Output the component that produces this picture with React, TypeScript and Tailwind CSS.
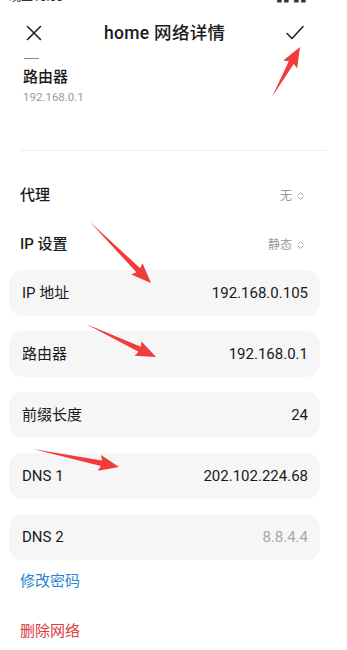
import React from 'react';

type Row = { label: string; value: string; muted?: boolean };

const rows: Row[] = [
  { label: 'IP 地址', value: '192.168.0.105' },
  { label: '路由器', value: '192.168.0.1' },
  { label: '前缀长度', value: '24' },
  { label: 'DNS 1', value: '202.102.224.68' },
  { label: 'DNS 2', value: '8.8.4.4', muted: true },
];

// annotation arrows: tail -> tip
const arrows = [
  { from: [272, 97], to: [300, 47] },
  { from: [90, 222], to: [151, 283] },
  { from: [86, 324], to: [156, 357] },
  { from: [33, 449], to: [119, 467] },
];

function arrowPoints(from: number[], to: number[]) {
  const [x1, y1] = from;
  const [x2, y2] = to;
  const dx = x2 - x1;
  const dy = y2 - y1;
  const len = Math.hypot(dx, dy);
  const ux = dx / len;
  const uy = dy / len;
  const px = -uy;
  const py = ux;
  const head = 18;
  const bx = x2 - ux * head;
  const by = y2 - uy * head;
  const shaft = 2.8;
  const wing = 8;
  const pts = [
    [x1, y1],
    [bx + px * shaft, by + py * shaft],
    [bx + px * wing - ux * 2, by + py * wing - uy * 2],
    [x2, y2],
    [bx - px * wing - ux * 2, by - py * wing - uy * 2],
    [bx - px * shaft, by - py * shaft],
  ];
  return pts.map((p) => p.join(',')).join(' ');
}

function Updown() {
  return (
    <svg width="7" height="10" viewBox="0 0 7 10" fill="none" stroke="#a8a8a8" strokeWidth="1" strokeLinecap="round" strokeLinejoin="round">
      <path d="M1 4 L3.5 1.5 L6 4" />
      <path d="M1 6 L3.5 8.5 L6 6" />
    </svg>
  );
}

export default function App() {
  return (
    <div
      className="relative w-[347px] h-[650px] overflow-hidden bg-white text-[#1a1a1a]"
      style={{ fontFamily: 'Roboto, "Noto Sans CJK SC", sans-serif' }}
    >
      {/* status bar, mostly cut off */}
      <div className="h-[4px] overflow-hidden relative">
        <div className="absolute left-[9px] top-[-10px] text-[12px] leading-[14px] text-[#333]">晚上10:08</div>
        <div className="absolute right-[40px] top-[-10px] text-[12px] leading-[14px] text-[#333]">▮▮ ▮▮</div>
      </div>

      {/* header */}
      <div className="mt-[6px] h-[46px] flex items-center pl-[25px] pr-[42px]">
        <svg width="18" height="18" viewBox="0 0 18 18" fill="none" stroke="#222" strokeWidth="1.6" strokeLinecap="round">
          <path d="M2.5 2.5 L15.5 15.5 M15.5 2.5 L2.5 15.5" />
        </svg>
        <div className="ml-[61px] text-[17.5px] font-medium tracking-[0.3px]">home 网络详情</div>
        <svg className="ml-auto" width="20" height="18" viewBox="0 0 20 18" fill="none" stroke="#222" strokeWidth="1.6" strokeLinecap="round" strokeLinejoin="round">
          <path d="M2 9.5 L7 14.5 L18 2.5" />
        </svg>
      </div>

      <div className="px-[23px]">
        <div className="mt-[2px] ml-[1px] w-[15px] h-px bg-[#888]" />
        <div className="mt-[8px] text-[15px] leading-[21px] font-medium">路由器</div>
        <div className="mt-[1px] text-[11.5px] leading-[16px] text-[#9a9a9a]">192.168.0.1</div>
      </div>

      <div className="mx-[20px] mt-[45px] h-px bg-[#eeeeee]" />

      <div className="mt-[20px] pl-[20px] pr-[43px]">
        <div className="h-[49px] flex items-center justify-between">
          <span className="text-[15px] font-medium">代理</span>
          <span className="flex items-center gap-[5px] text-[12px] text-[#999]">
            无 <Updown />
          </span>
        </div>
        <div className="h-[49px] flex items-center justify-between">
          <span className="text-[15px] font-medium">IP 设置</span>
          <span className="flex items-center gap-[5px] text-[12px] text-[#999]">
            静态 <Updown />
          </span>
        </div>
      </div>

      <div className="mt-[1px] pl-[9px] pr-[27px] flex flex-col gap-[15px]">
        {rows.map((r) => (
          <div key={r.label} className="h-[46px] rounded-[14px] bg-[#f6f6f6] flex items-center justify-between pl-[13px] pr-[12px]">
            <span className="text-[15px]">{r.label}</span>
            <span className={r.muted ? 'text-[15px] text-[#a8a8a8]' : 'text-[15px] text-[#1a1a1a]'}>{r.value}</span>
          </div>
        ))}
      </div>

      <div className="px-[20px]">
        <div className="h-[42px] flex items-center text-[15px] text-[#2a83d4]">修改密码</div>
        <div className="mt-[8px] h-[42px] flex items-center text-[15px] text-[#d6403e]">删除网络</div>
      </div>

      {/* red annotation arrows */}
      <svg className="absolute inset-0 pointer-events-none" width="347" height="650" viewBox="0 0 347 650">
        {arrows.map((a, i) => (
          <polygon key={i} points={arrowPoints(a.from, a.to)} fill="#f23b3b" />
        ))}
      </svg>
    </div>
  );
}
